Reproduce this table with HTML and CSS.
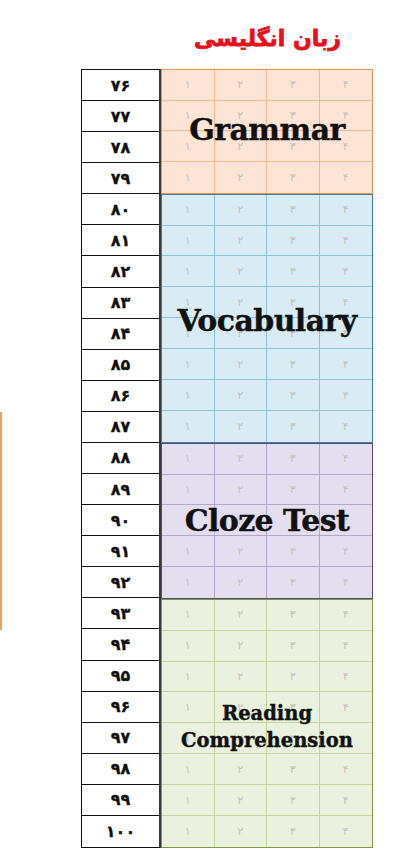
FILE: index.html
```html
<!DOCTYPE html>
<html lang="fa">
<head>
<meta charset="utf-8">
<link rel="stylesheet" href="styles.css">
</head>
<body>
<div class="edge"></div>
<div class="page">
  <div class="head">
    <div class="spacer"></div>
    <h1 class="title">زبان انگلیسی</h1>
  </div>
  <div class="sheet">
    <div class="nums">
      <div class="n">۷۶</div><div class="n">۷۷</div><div class="n">۷۸</div><div class="n">۷۹</div>
      <div class="n">۸۰</div><div class="n">۸۱</div><div class="n">۸۲</div><div class="n">۸۳</div>
      <div class="n">۸۴</div><div class="n">۸۵</div><div class="n">۸۶</div><div class="n">۸۷</div>
      <div class="n">۸۸</div><div class="n">۸۹</div><div class="n">۹۰</div><div class="n">۹۱</div>
      <div class="n">۹۲</div><div class="n">۹۳</div><div class="n">۹۴</div><div class="n">۹۵</div>
      <div class="n">۹۶</div><div class="n">۹۷</div><div class="n">۹۸</div><div class="n">۹۹</div>
      <div class="n">۱۰۰</div>
    </div>
    <div class="answers">
      <div class="sec grammar" data-rows="4"></div>
      <div class="sec vocab" data-rows="8"></div>
      <div class="sec cloze" data-rows="5"></div>
      <div class="sec reading" data-rows="8"></div>
    </div>
  </div>
</div>
<script src="app.js"></script>
</body>
</html>
```
FILE: app.js
```js
var labels = {grammar: 'Grammar', vocab: 'Vocabulary', cloze: 'Cloze Test', reading: 'Reading<br>Comprehension'};
var digits = ['۱', '۲', '۳', '۴'];
document.querySelectorAll('.sec').forEach(function (sec) {
  var rows = parseInt(sec.getAttribute('data-rows'), 10);
  var grid = document.createElement('div');
  grid.className = 'grid';
  for (var r = 0; r < rows; r++) {
    for (var c = 0; c < 4; c++) {
      var cell = document.createElement('div');
      cell.className = 'cell';
      cell.textContent = digits[c];
      grid.appendChild(cell);
    }
  }
  sec.appendChild(grid);
  var key = sec.classList[1];
  var lab = document.createElement('div');
  lab.className = 'label';
  lab.innerHTML = labels[key];
  sec.appendChild(lab);
});
```
FILE: styles.css
```css
html, body {
  margin: 0;
  padding: 0;
  background: #ffffff;
}
body {
  width: 400px;
  height: 851px;
  overflow: hidden;
  position: relative;
  font-family: "DejaVu Sans", sans-serif;
}
.edge {
  position: absolute;
  left: 0;
  top: 412px;
  width: 2px;
  height: 218px;
  background: #e9a25e;
}
.page {
  display: flex;
  flex-direction: column;
}
.head {
  height: 69px;
  display: flex;
}
.spacer {
  width: 162px;
  flex: none;
}
.title {
  flex: 1;
  margin: 0;
  padding-top: 23px;
  text-align: center;
  color: #e8101a;
  font-family: "DejaVu Sans", sans-serif;
  font-weight: bold;
  font-size: 22px;
  line-height: 32px;
  margin-right: 27px;
  -webkit-text-stroke: 0.8px #e8101a;
  direction: rtl;
}
.sheet {
  display: flex;
  margin-left: 81px;
  width: 292px;
  height: 779px;
}
.nums {
  width: 80px;
  flex: none;
  display: grid;
  grid-template-rows: repeat(25, 1fr);
  border: 1px solid #111;
  border-right: 2px solid #3a3a3a;
  box-sizing: border-box;
}
.n {
  border-bottom: 1px solid #111;
  display: flex;
  align-items: center;
  justify-content: center;
  font-weight: bold;
  font-size: 16px;
  color: #111;
  font-family: "DejaVu Sans", sans-serif;
  -webkit-text-stroke: 0.3px #111;
}
.n:last-child {
  border-bottom: none;
}
.answers {
  flex: 1;
  display: grid;
  grid-template-rows: repeat(25, 1fr);
}
.sec {
  position: relative;
  box-sizing: border-box;
  border: 1.5px solid;
}
.grammar { grid-row: span 4; background: #fce4d6; border-color: #e8944e; }
.vocab { grid-row: span 8; background: #d9ebf3; border-color: #3f7f98; }
.cloze { grid-row: span 5; background: #e4dff0; border-color: #5a4a7a; }
.reading { grid-row: span 8; background: #ebf1df; border-color: #7f9a47; }
.grid {
  height: 100%;
  display: grid;
  grid-template-columns: repeat(4, 1fr);
  grid-auto-rows: 1fr;
}
.cell {
  display: flex;
  align-items: center;
  justify-content: center;
  font-size: 11px;
  color: #c2c2c2;
  border-right: 1px solid;
  border-bottom: 1px solid;
}
.cell:nth-child(4n) { border-right: none; }
.grammar .cell { border-color: #f2b88e; }
.vocab .cell { border-color: #8cc3d6; }
.cloze .cell { border-color: #b3a8cc; }
.reading .cell { border-color: #c3d69b; }
.grammar .cell:nth-last-child(-n+4),
.vocab .cell:nth-last-child(-n+4),
.cloze .cell:nth-last-child(-n+4),
.reading .cell:nth-last-child(-n+4) { border-bottom: none; }
.label {
  position: absolute;
  inset: 0;
  display: flex;
  align-items: center;
  justify-content: center;
  text-align: center;
  font-family: "DejaVu Serif", serif;
  font-weight: bold;
  color: #111;
  font-size: 30px;
  letter-spacing: -0.6px;
  -webkit-text-stroke: 0.4px #111;
}
.grammar .label { padding-bottom: 3px; }
.vocab .label { padding-top: 4px; }
.reading .label {
  font-size: 19.5px;
  line-height: 27px;
  letter-spacing: 0;
  padding-top: 7px;
}
```
